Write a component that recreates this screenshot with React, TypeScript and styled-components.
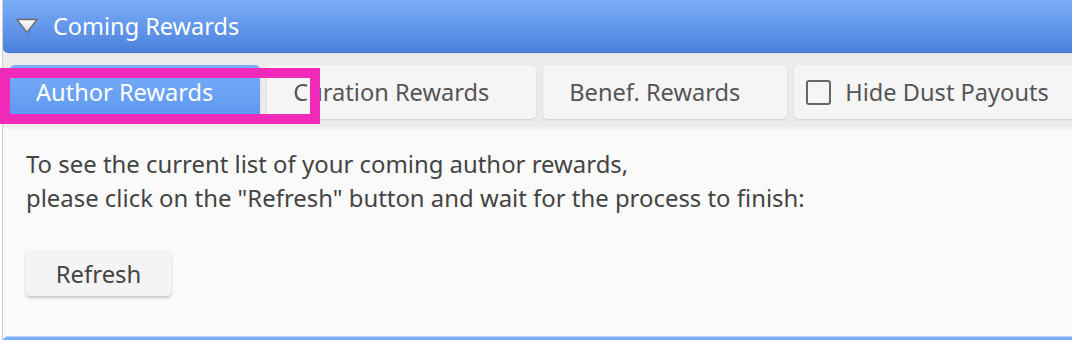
import styled, { createGlobalStyle } from "styled-components";
import { useState } from "react";

const GlobalStyle = createGlobalStyle`
  body {
    margin: 0;
    background: #ffffff;
    font-family: "Noto Sans", "Open Sans", Arial, sans-serif;
    overflow: hidden;
  }
`;

const Panel = styled.div`
  position: relative;
  width: 1100px;
  margin-left: 2px;
  border-left: 1px solid #cfcfcf;
  background: #fafafa;
`;

const Header = styled.div`
  display: flex;
  align-items: center;
  gap: 14px;
  height: 53px;
  padding-left: 12px;
  box-sizing: border-box;
  background: linear-gradient(#7badf8, #4c82de);
  border-bottom: 1px solid #3f70c4;
  border-radius: 0 0 0 5px;
  color: #ffffff;
  font-size: 23.5px;
`;

const TabBar = styled.div`
  display: flex;
  gap: 7px;
  padding: 12px 0 8px 7px;
  background: #ebebeb;
  border-bottom: 2px solid #f2f2f2;
`;

const Tab = styled.button<{ $active?: boolean }>`
  display: flex;
  align-items: center;
  height: 54px;
  padding: 0 47px 0 26px;
  border: none;
  border-radius: 5px;
  font-family: inherit;
  font-size: 23.6px;
  color: ${(p) => (p.$active ? "#ffffff" : "#555555")};
  background: ${(p) =>
    p.$active ? "linear-gradient(#78aef9, #5d96ef)" : "#f5f5f5"};
  box-shadow: 0 1px 2px rgba(0, 0, 0, 0.12);
  cursor: pointer;
`;

const CheckTab = styled.label`
  display: flex;
  align-items: center;
  gap: 14px;
  height: 54px;
  padding: 0 40px 0 12px;
  border-radius: 5px;
  background: #f5f5f5;
  box-shadow: 0 1px 2px rgba(0, 0, 0, 0.12);
  font-size: 23.6px;
  color: #555555;
  cursor: pointer;
`;

const Box = styled.span<{ $checked: boolean }>`
  width: 21px;
  height: 21px;
  border: 2.5px solid #666666;
  border-radius: 3px;
  background: ${(p) => (p.$checked ? "#5d96ef" : "transparent")};
`;

const Body = styled.div`
  padding: 18px 23px 40px;
  font-size: 23.9px;
  line-height: 34px;
  color: #444444;
`;

const Text = styled.p`
  margin: 0 0 35px;
`;

const Button = styled.button`
  width: 145px;
  height: 46px;
  border: none;
  border-radius: 4px;
  background: #f4f4f4;
  box-shadow: 0 2px 3px rgba(0, 0, 0, 0.2);
  font-family: inherit;
  font-size: 23.9px;
  color: #444444;
  cursor: pointer;
`;

const Footer = styled.div`
  height: 10px;
  background: #7eaef8;
  border-top: 1px solid #b5d1fb;
  border-radius: 5px 0 0 0;
`;

const Highlight = styled.div`
  position: absolute;
  left: -3px;
  top: 68px;
  width: 300px;
  height: 36px;
  border: 10px solid #f02bb9;
  pointer-events: none;
`;

function Caret() {
  return (
    <svg width="24" height="18" viewBox="0 0 24 18">
      <defs>
        <linearGradient id="caretFill" x1="0" y1="0" x2="0" y2="1">
          <stop offset="0" stopColor="#ffffff" />
          <stop offset="1" stopColor="#dcdcdc" />
        </linearGradient>
      </defs>
      <path
        d="M2 2.5 H22 L12 15.5 Z"
        fill="url(#caretFill)"
        stroke="#6b6b6b"
        strokeWidth="1.3"
        strokeLinejoin="round"
      />
    </svg>
  );
}

export default function App() {
  const [tab, setTab] = useState("author");
  const [hideDust, setHideDust] = useState(false);

  return (
    <>
      <GlobalStyle />
      <Panel>
        <Header>
          <Caret />
          Coming Rewards
        </Header>
        <TabBar>
          <Tab $active={tab === "author"} onClick={() => setTab("author")}>
            Author Rewards
          </Tab>
          <Tab $active={tab === "curation"} onClick={() => setTab("curation")}>
            Curation Rewards
          </Tab>
          <Tab $active={tab === "benef"} onClick={() => setTab("benef")}>
            Benef. Rewards
          </Tab>
          <CheckTab onClick={() => setHideDust(!hideDust)}>
            <Box $checked={hideDust} />
            Hide Dust Payouts
          </CheckTab>
        </TabBar>
        <Body>
          <Text>
            To see the current list of your coming author rewards,
            <br />
            please click on the "Refresh" button and wait for the process to
            finish:
          </Text>
          <Button>Refresh</Button>
        </Body>
        <Footer />
        <Highlight />
      </Panel>
    </>
  );
}
